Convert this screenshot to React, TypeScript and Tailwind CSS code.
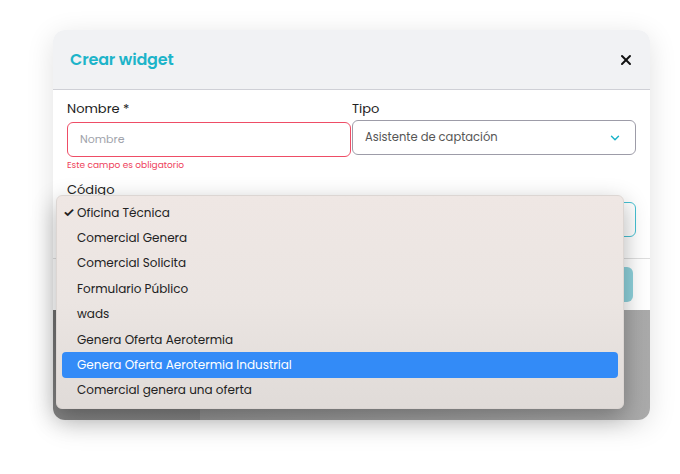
import { ChevronDown, X } from "lucide-react";

const OPTIONS = [
  "Oficina Técnica",
  "Comercial Genera",
  "Comercial Solicita",
  "Formulario Público",
  "wads",
  "Genera Oferta Aerotermia",
  "Genera Oferta Aerotermia Industrial",
  "Comercial genera una oferta",
];

const SELECTED = 0;
const HIGHLIGHTED = 6;

export default function App() {
  return (
    <div
      className="relative min-h-[474px] w-[680px] bg-white pl-[53px] pt-[30px]"
      style={{ fontFamily: "Poppins, Inter, 'Noto Sans', sans-serif" }}
    >
      {/* tarjeta con la captura del modal */}
      <div className="flex h-[390px] w-[597px] flex-col overflow-hidden rounded-[12px] shadow-[0_6px_28px_rgba(0,0,0,0.12)]">
        <div className="flex h-[60px] shrink-0 items-center justify-between border-b border-[#cfd0d6] bg-[#f1f2f4] pl-[17px] pr-[16px]">
          <h2 className="text-[16px] font-semibold tracking-[-0.01em] text-[#1db4c9]">Crear widget</h2>
          <X className="h-[16px] w-[16px] text-[#111]" strokeWidth={3} />
        </div>

        <div className="flex h-[220px] shrink-0 flex-col rounded-br-[12px] bg-white">
          <div className="grid grid-cols-[284px_284px] gap-x-[1px] px-[14px] pt-[10px]">
            <div className="flex flex-col">
              <label className="h-[18px] text-[13px] leading-[18px] text-[#222]">Nombre *</label>
              <div className="mt-[4px] flex h-[35px] items-center rounded-[6px] border border-[#ee4d66] pl-[12px] text-[11px] text-[#a0a3ab]">
                Nombre
              </div>
              <span className="mt-[2px] text-[9px] leading-[12px] text-[#ee3f5c]">Este campo es obligatorio</span>
            </div>
            <div className="flex flex-col">
              <label className="h-[18px] text-[13px] leading-[18px] text-[#222]">Tipo</label>
              <div className="mt-[2px] flex h-[35px] items-center justify-between rounded-[6px] border border-[#9d9ca8] pl-[12px] pr-[13px] text-[11.5px] text-[#555]">
                <span>Asistente de captación</span>
                <ChevronDown className="h-[14px] w-[14px] text-[#1db4c9]" strokeWidth={2.5} />
              </div>
            </div>
            <div className="col-span-2 mt-[10px] flex flex-col">
              <label className="h-[18px] text-[13px] leading-[18px] text-[#222]">Código</label>
              <div className="mt-[3px] h-[35px] rounded-[6px] border border-[#46c0d2]" />
            </div>
          </div>
          <div className="mt-auto flex h-[52px] items-center justify-end border-t border-[#dedede] pr-[17px]">
            <div className="h-[35px] w-[120px] rounded-[6px] bg-[#8fd2dc]" />
          </div>
        </div>

        <div className="flex flex-1">
          <div className="w-[147px] bg-gradient-to-b from-[#6f6f6f] to-[#858585]" />
          <div className="flex-1 bg-gradient-to-r from-[#939393] to-[#aaaaaa]" />
        </div>
      </div>

      {/* menú desplegable nativo */}
      <div className="absolute left-[56px] top-[195px] w-[568px] rounded-[6px] border border-[#dcd6d3] bg-gradient-to-b from-[#efe7e4] via-[#ebe5e2] to-[#e0dbd8] pb-[5px] pt-[4px] shadow-[0_8px_24px_rgba(0,0,0,0.3)]">
        {OPTIONS.map((opt, i) => (
          <div
            key={opt}
            className={`relative mx-[5px] flex h-[25.4px] items-center rounded-[4px] pl-[15px] text-[12px] ${
              i === HIGHLIGHTED ? "bg-[#338bf7] text-white" : "text-[#222]"
            }`}
          >
            {i === SELECTED && (
              <span className="absolute left-[1px] text-[13px] font-bold text-[#222]">✓</span>
            )}
            {opt}
          </div>
        ))}
      </div>
    </div>
  );
}
